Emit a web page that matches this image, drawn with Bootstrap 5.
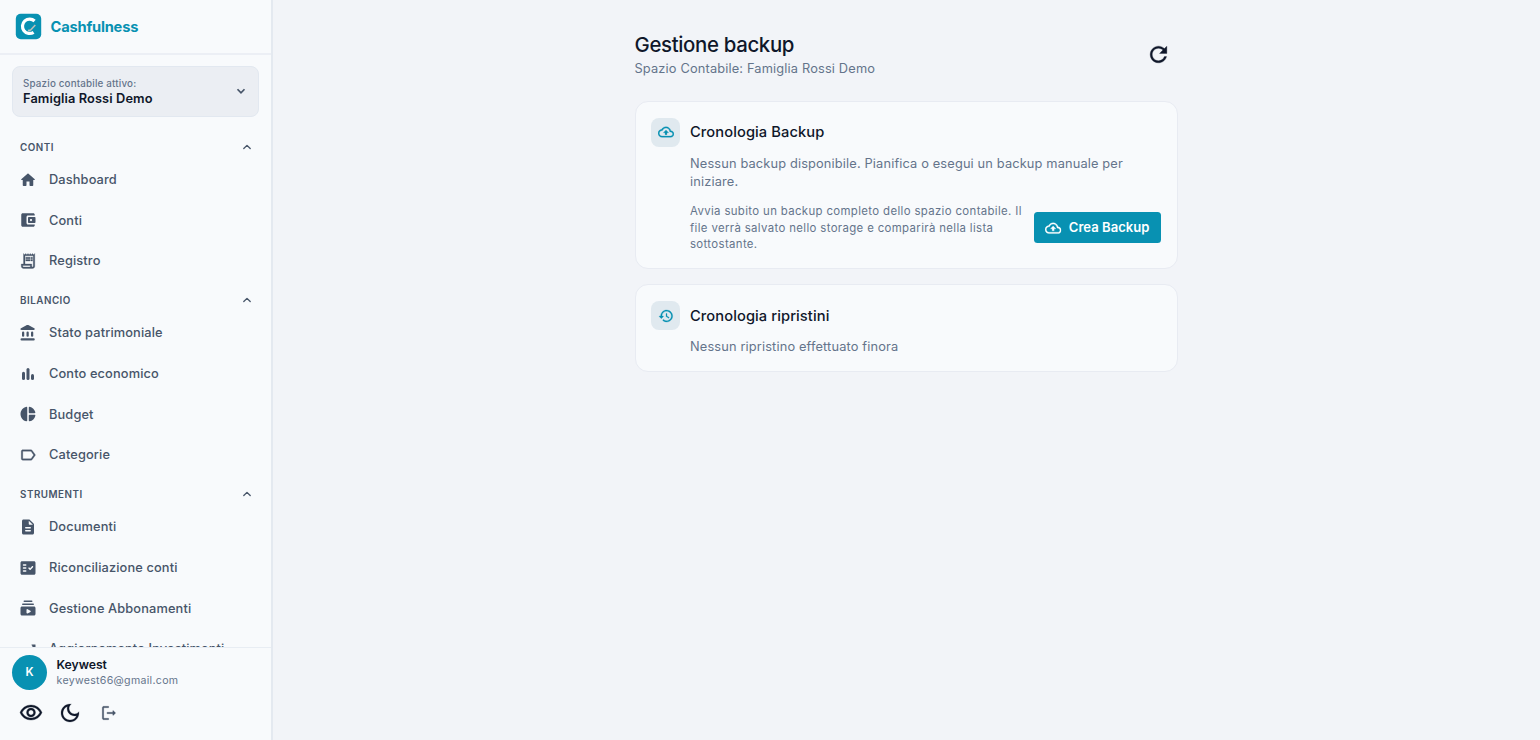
<!DOCTYPE html>
<html lang="it">
<head>
<meta charset="utf-8">
<meta name="viewport" content="width=device-width, initial-scale=1">
<title>Cashfulness - Gestione backup</title>
<link href="https://cdn.jsdelivr.net/npm/bootstrap@5.3.0/dist/css/bootstrap.min.css" rel="stylesheet">
<style>
:root{--teal:#0891b2;--ink:#0f172a;--slate:#475569;--muted:#64748b;--line:#e2e8f0}
body{font-family:Inter,"Liberation Sans",sans-serif;background:#f2f4f8;color:var(--ink);height:100vh;overflow:hidden}
svg{display:block;flex:none;fill:currentColor}
.sidebar{width:273px;background:#f8fafc;border-right:2px solid #e4e9f0;flex:none}
.brand{height:55px;padding:0 15px;border-bottom:2px solid #eceff5;gap:8.5px;flex:none}
.brand-name{color:var(--teal);font-size:14.7px;font-weight:700;letter-spacing:-.22px;padding-top:1px}
.space-box{margin:11px 12px 0;height:51px;padding:0 10.5px 0 10px;border:1px solid #e2e8f0;border-radius:8px;background:#ebeef3;flex:none}
.space-box svg{margin-top:-1px}
.space-label{font-size:9.8px;line-height:14px;font-weight:500;color:var(--muted);letter-spacing:.18px}
.space-name{font-size:12.8px;line-height:16px;font-weight:600;letter-spacing:.11px}
.menu{padding-top:19.2px;flex:1 1 0;min-height:0;overflow:hidden}
.menu-group{margin-bottom:8px}
.menu-head{height:23px;padding:1px 17px 0 20px;font-size:9.8px;font-weight:600;color:var(--slate);letter-spacing:.52px}
.menu-head svg{margin-top:-2px}
.menu-item{height:40.75px;padding-left:19.4px;gap:11.6px;font-size:12.8px;font-weight:500;color:var(--slate);letter-spacing:.13px;white-space:nowrap}
.account{height:93.5px;border-top:1.5px solid #e8edf3;padding:7.5px 12px 0;flex:none}
.account-text{margin-left:9.5px}
.avatar{width:35px;height:35px;border-radius:50%;background:var(--teal);color:#fff;font-size:11.5px;font-weight:600}
.user-name{font-size:12.24px;line-height:16px;font-weight:600;letter-spacing:-.05px}
.user-mail{font-size:10.6px;line-height:16px;color:var(--muted);letter-spacing:.3px}
.tools{padding:11px 0 0 7px;gap:15px}
.tools .exit{margin-left:2.5px}
.content-col{width:543px;padding-top:32px;margin-right:1px}
.page-title{font-size:20.4px;line-height:25px;font-weight:500;letter-spacing:-.34px;margin:0}
.page-sub{font-size:12.8px;line-height:18px;color:var(--muted);letter-spacing:.16px;margin-top:2.5px}
.reload{margin:9.8px 6.5px 0 0}
.panel{background:#f8fafc;border:1.5px solid #e8ebf2;border-radius:13px;padding:16px 15.5px 0}
.first-panel{margin-top:23px;height:168px}
.second-panel{margin-top:15.5px;height:88px}
.panel-head{gap:10px}
.tile{width:29px;height:29px;border-radius:8px;background:#e0e9ef;color:var(--teal)}
.tile svg{stroke:currentColor;stroke-width:.4}
.panel-title{font-size:14.7px;line-height:20px;font-weight:500;letter-spacing:.08px;margin:0}
.panel-text{font-size:12.8px;line-height:18.5px;color:var(--muted);letter-spacing:.15px;margin-top:8px}
.hint{font-size:11.4px;line-height:16.4px;color:var(--muted);letter-spacing:.36px}
.hint-row{margin-top:11.6px;gap:12px}
.btn-create{width:127px;height:31px;padding:0;gap:7px;border:0;border-radius:3.5px;background:var(--teal);color:#fff;font-size:13.05px;font-weight:600;letter-spacing:.03px;white-space:nowrap;flex:none}
.btn-create svg{stroke:currentColor;stroke-width:.4}
.inset{padding-left:39px}
</style>
</head>
<body class="d-flex">
<svg width="0" height="0" class="position-absolute" aria-hidden="true">
  <symbol id="up" viewBox="0 0 24 24"><path d="M6.5 14.700l5.500-5.500 5.500 5.500" fill="none" stroke="currentColor" stroke-width="2.300" stroke-linecap="round" stroke-linejoin="round"/></symbol>
  <symbol id="down" viewBox="0 0 24 24"><path d="M6 9l6 6 6-6" fill="none" stroke="currentColor" stroke-width="3"/></symbol>
  <symbol id="home" viewBox="0 0 24 24"><path d="M10 19v-5h4v5c0 .55.45 1 1 1h3c.55 0 1-.45 1-1v-7h1.7c.46 0 .68-.57.33-.87L12.67 3.6c-.38-.34-.96-.34-1.34 0l-8.36 7.53c-.34.3-.13.87.33.87H5v7c0 .55.45 1 1 1h3c.55 0 1-.45 1-1z"/></symbol>
  <symbol id="wallet" viewBox="0 0 24 24"><path d="M10 16V8c0-1.1.89-2 2-2h9V5c0-1.1-.9-2-2-2H5c-1.110 0-2 .9-2 2v14c0 1.1.89 2 2 2h14c1.1 0 2-.9 2-2v-1h-9c-1.110 0-2-.9-2-2zm3-8c-.55 0-1 .45-1 1v6c0 .55.45 1 1 1h8c.55 0 1-.45 1-1V9c0-.55-.45-1-1-1h-8zm3 5.500c-.83 0-1.500-.67-1.500-1.500s.67-1.500 1.500-1.500 1.500.67 1.500 1.500-.67 1.500-1.500 1.500z"/></symbol>
  <symbol id="receipt" viewBox="0 0 24 24"><path d="M19.500 3.500 18 2l-1.500 1.500L15 2l-1.500 1.500L12 2l-1.500 1.500L9 2 7.500 3.500 6 2v14H3v3c0 1.660 1.340 3 3 3h12c1.660 0 3-1.340 3-3V2l-1.500 1.500zM15 20H6c-.55 0-1-.45-1-1v-1h10v2zm4-1c0 .55-.45 1-1 1s-1-.45-1-1v-3H8V5h11v14zM9 7h6v2H9zM16 7h2v2h-2zM9 10h6v2H9zM16 10h2v2h-2z" stroke="currentColor" stroke-width=".4"/></symbol>
  <symbol id="bank" viewBox="0 0 24 24"><path d="M10.570 1.490l-7.900 4.160c-.41.21-.67.64-.67 1.100C2 7.440 2.560 8 3.250 8h16.510C20.440 8 21 7.440 21 6.750c0-.46-.26-.89-.67-1.100l-7.900-4.160c-.58-.31-1.280-.31-1.860 0z"/><rect x="4" y="10" width="3" height="7" rx="1.500"/><rect x="10" y="10" width="3" height="7" rx="1.500"/><rect x="16" y="10" width="3" height="7" rx="1.500"/><rect x="2" y="19" width="19" height="3" rx="1.500"/></symbol>
  <symbol id="bars" viewBox="0 0 24 24"><rect x="4" y="9" width="4" height="11" rx="2"/><rect x="10" y="4" width="4" height="16" rx="2"/><rect x="16" y="12" width="4" height="8" rx="2"/></symbol>
  <symbol id="pie" viewBox="0 0 24 24"><path d="M11 3.180v17.640c0 .64-.59 1.120-1.210.98C5.320 20.800 2 16.790 2 12s3.320-8.800 7.790-9.800c.62-.14 1.210.34 1.210.98zm2.030 0v6.810c0 .55.45 1 1 1h6.790c.64 0 1.120-.59.98-1.220-.85-3.760-3.800-6.720-7.550-7.570-.63-.14-1.220.34-1.220.98zm0 10.830v6.810c0 .64.59 1.120 1.220.98 3.760-.85 6.710-3.820 7.560-7.580.14-.62-.35-1.220-.98-1.220h-6.790c-.56.010-1.010.46-1.010 1.010z"/></symbol>
  <symbol id="tag" viewBox="0 0 24 24"><path d="M17.630 5.840C17.270 5.330 16.670 5 16 5L5 5.010C3.900 5.010 3 5.900 3 7v10c0 1.100.9 1.990 2 1.990L16 19c.67 0 1.270-.33 1.630-.84L22 12l-4.370-6.160zM16 17H5V7h11l3.550 5L16 17z" stroke="currentColor" stroke-width=".4"/></symbol>
  <symbol id="doc" viewBox="0 0 24 24"><path d="M14.590 2.590c-.38-.38-.89-.59-1.420-.59H6c-1.100 0-2 .9-2 2v16c0 1.100.89 2 1.990 2H18c1.100 0 2-.9 2-2V8.830c0-.53-.21-1.040-.59-1.410l-4.820-4.830zM15 18H9c-.55 0-1-.45-1-1s.45-1 1-1h6c.55 0 1 .45 1 1s-.45 1-1 1zm0-4H9c-.55 0-1-.45-1-1s.45-1 1-1h6c.55 0 1 .45 1 1s-.45 1-1 1zm-2-6V3.500L18.500 9H14c-.55 0-1-.45-1-1z"/></symbol>
  <symbol id="check" viewBox="0 0 24 24"><path d="M20 3H4c-1.100 0-2 .9-2 2v14c0 1.100.9 2 2 2h16c1.100 0 2-.9 2-2V5c0-1.100-.9-2-2-2zM9 17H6c-.55 0-1-.45-1-1s.45-1 1-1h3c.55 0 1 .45 1 1s-.45 1-1 1zm0-4H6c-.55 0-1-.45-1-1s.45-1 1-1h3c.55 0 1 .45 1 1s-.45 1-1 1zm0-4H6c-.55 0-1-.45-1-1s.45-1 1-1h3c.55 0 1 .45 1 1s-.45 1-1 1zm9.700 2.120-3.170 3.170c-.39.39-1.030.39-1.420 0l-1.410-1.420c-.39-.39-.39-1.020 0-1.410.39-.39 1.020-.39 1.410 0l.71.71 2.470-2.470c.39-.39 1.020-.39 1.410 0l.01.01c.38.39.38 1.030-.01 1.410z"/></symbol>
  <symbol id="subs" viewBox="0 0 24 24"><path d="M5 6h14c.55 0 1 .45 1 1s-.45 1-1 1H5c-.55 0-1-.45-1-1s.45-1 1-1zM7 2h10c.55 0 1 .45 1 1s-.45 1-1 1H7c-.55 0-1-.45-1-1s.45-1 1-1zM22 12v8c0 1.100-.9 2-2 2H4c-1.100 0-2-.9-2-2v-8c0-1.100.9-2 2-2h16c1.100 0 2 .9 2 2zm-6.800 3.560-3.730-2.030c-.66-.36-1.470.12-1.470.88v4.050c0 .76.81 1.240 1.480.88l3.730-2.030c.69-.37.69-1.370-.01-1.750z"/></symbol>
  <symbol id="trend" viewBox="0 0 24 24"><path d="M16.850 6.850l1.440 1.440-4.880 4.880-3.290-3.290c-.39-.39-1.020-.39-1.410 0l-6 6.010c-.39.39-.39 1.020 0 1.410.39.39 1.020.39 1.410 0L9.410 12l3.290 3.290c.39.39 1.020.39 1.410 0l5.590-5.580 1.440 1.440c.31.31.85.09.85-.35V6.500c.01-.28-.21-.5-.49-.5h-4.290c-.45 0-.67.54-.36.85z"/></symbol>
  <symbol id="cloud" viewBox="0 0 24 24"><path d="M19.350 10.040C18.670 6.590 15.640 4 12 4 9.110 4 6.600 5.640 5.350 8.040 2.340 8.360 0 10.910 0 14c0 3.310 2.690 6 6 6h13c2.760 0 5-2.240 5-5 0-2.640-2.050-4.780-4.650-4.960zM19 18H6c-2.210 0-4-1.790-4-4 0-2.050 1.530-3.760 3.560-3.970l1.070-.11.5-.95C8.080 7.140 9.940 6 12 6c2.620 0 4.880 1.860 5.390 4.430l.3 1.500 1.530.11c1.560.1 2.780 1.410 2.780 2.960 0 1.650-1.350 3-3 3zM8 13h2.550v3h2.900v-3H16l-4-4z"/></symbol>
  <symbol id="history" viewBox="0 0 24 24"><path d="M13.260 3C8.170 2.860 4 6.950 4 12H2.210c-.45 0-.67.54-.35.85l2.790 2.800c.2.2.51.2.71 0l2.790-2.800c.31-.31.09-.85-.36-.85H6c0-3.900 3.180-7.050 7.100-7 3.720.05 6.850 3.180 6.900 6.900.05 3.910-3.100 7.100-7 7.100-1.610 0-3.100-.55-4.280-1.480-.4-.31-.96-.28-1.320.08-.42.42-.39 1.130.08 1.490C9 20.290 10.910 21 13 21c5.050 0 9.140-4.170 9-9.260-.13-4.690-4.050-8.610-8.740-8.740zm-.51 5c-.41 0-.75.34-.75.75v3.680c0 .35.19.68.49.86l3.120 1.850c.36.21.82.09 1.030-.26.21-.36.09-.82-.26-1.030l-2.880-1.710v-3.400c0-.4-.34-.74-.75-.74z"/></symbol>
  <symbol id="refresh" viewBox="0 0 24 24"><path d="M17.650 6.350C16.200 4.900 14.210 4 12 4c-4.420 0-7.990 3.580-7.990 8s3.570 8 7.990 8c3.730 0 6.840-2.550 7.730-6h-2.080c-.82 2.330-3.040 4-5.650 4-3.310 0-6-2.690-6-6s2.690-6 6-6c1.660 0 3.140.69 4.220 1.780L13 11h7V4l-2.350 2.350z" stroke="currentColor" stroke-width=".3"/></symbol>
  <symbol id="eye" viewBox="0 0 24 24"><path d="M12 6c3.790 0 7.170 2.130 8.820 5.500C19.170 14.870 15.790 17 12 17s-7.170-2.130-8.820-5.500C4.830 8.130 8.210 6 12 6m0-2C7 4 2.730 7.110 1 11.500 2.730 15.890 7 19 12 19s9.270-3.110 11-7.500C21.270 7.110 17 4 12 4zm0 5c1.380 0 2.500 1.120 2.500 2.500S13.380 14 12 14s-2.500-1.120-2.500-2.500S10.620 9 12 9m0-2c-2.480 0-4.500 2.020-4.500 4.500S9.520 16 12 16s4.500-2.020 4.500-4.500S14.480 7 12 7z" stroke="currentColor" stroke-width=".3"/></symbol>
  <symbol id="moon" viewBox="0 0 24 24"><path d="M9.370 5.510C9.190 6.150 9.100 6.820 9.100 7.500c0 4.080 3.320 7.400 7.400 7.400.68 0 1.350-.09 1.990-.27C17.450 17.190 14.930 19 12 19c-3.860 0-7-3.140-7-7 0-2.930 1.810-5.450 4.370-6.490zM12 3c-4.970 0-9 4.030-9 9s4.030 9 9 9 9-4.030 9-9c0-.46-.04-.92-.1-1.360-.98 1.370-2.580 2.260-4.400 2.260-2.980 0-5.400-2.420-5.400-5.400 0-1.810.89-3.420 2.260-4.400C12.920 3.040 12.460 3 12 3z" stroke="currentColor" stroke-width=".2"/></symbol>
  <symbol id="logout" viewBox="0 0 24 24"><path d="M5 5h6c.55 0 1-.45 1-1s-.45-1-1-1H5c-1.100 0-2 .9-2 2v14c0 1.100.9 2 2 2h6c.55 0 1-.45 1-1s-.45-1-1-1H5V5zM20.650 11.650l-2.790-2.790c-.32-.32-.86-.1-.86.35V11h-7c-.55 0-1 .45-1 1s.45 1 1 1h7v1.790c0 .45.54.67.85.35l2.790-2.790c.2-.19.2-.51.01-.7z" stroke="currentColor" stroke-width=".3"/></symbol>
</svg>

<aside class="sidebar d-flex flex-column vh-100">
  <div class="brand d-flex align-items-center">
    <svg width="27" height="27" viewBox="0 0 27 27"><rect x=".8" y=".8" width="25.400" height="25.400" rx="5" fill="#0891b2"/><path d="M19.600 8A7.200 7.200 0 1 0 18.600 19.300" fill="none" stroke="#fff" stroke-width="3.200"/><path d="M13 17.600l2.600-.6 4.700-5" fill="none" stroke="#b9bdb9" stroke-width="1.600"/></svg>
    <span class="brand-name">Cashfulness</span>
  </div>
  <div class="space-box d-flex align-items-center justify-content-between">
    <div><div class="space-label">Spazio contabile attivo:</div><div class="space-name">Famiglia Rossi Demo</div></div>
    <svg width="14" height="14" color="#475569"><use href="#down"/></svg>
  </div>
  <nav class="menu">
    <div class="menu-group">
      <div class="menu-head d-flex align-items-center justify-content-between">CONTI<svg width="14" height="14"><use href="#up"/></svg></div>
      <div class="menu-item d-flex align-items-center"><svg width="18" height="18"><use href="#home"/></svg>Dashboard</div>
      <div class="menu-item d-flex align-items-center"><svg width="18" height="18"><use href="#wallet"/></svg>Conti</div>
      <div class="menu-item d-flex align-items-center"><svg width="18" height="18"><use href="#receipt"/></svg>Registro</div>
    </div>
    <div class="menu-group">
      <div class="menu-head d-flex align-items-center justify-content-between">BILANCIO<svg width="14" height="14"><use href="#up"/></svg></div>
      <div class="menu-item d-flex align-items-center"><svg width="18" height="18"><use href="#bank"/></svg>Stato patrimoniale</div>
      <div class="menu-item d-flex align-items-center"><svg width="18" height="18"><use href="#bars"/></svg>Conto economico</div>
      <div class="menu-item d-flex align-items-center"><svg width="18" height="18"><use href="#pie"/></svg>Budget</div>
      <div class="menu-item d-flex align-items-center"><svg width="18" height="18"><use href="#tag"/></svg>Categorie</div>
    </div>
    <div class="menu-group">
      <div class="menu-head d-flex align-items-center justify-content-between">STRUMENTI<svg width="14" height="14"><use href="#up"/></svg></div>
      <div class="menu-item d-flex align-items-center"><svg width="18" height="18"><use href="#doc"/></svg>Documenti</div>
      <div class="menu-item d-flex align-items-center"><svg width="18" height="18"><use href="#check"/></svg>Riconciliazione conti</div>
      <div class="menu-item d-flex align-items-center"><svg width="18" height="18"><use href="#subs"/></svg>Gestione Abbonamenti</div>
      <div class="menu-item d-flex align-items-center"><svg width="18" height="18"><use href="#trend"/></svg>Aggiornamento Investimenti</div>
    </div>
  </nav>
  <div class="account">
    <div class="d-flex align-items-center">
      <div class="avatar d-flex align-items-center justify-content-center">K</div>
      <div class="account-text"><div class="user-name">Keywest</div><div class="user-mail">keywest66@gmail.com</div></div>
    </div>
    <div class="d-flex align-items-center tools">
      <svg width="24" height="24"><use href="#eye"/></svg>
      <svg width="24" height="24"><use href="#moon"/></svg>
      <svg class="exit" width="18" height="18" color="#475569"><use href="#logout"/></svg>
    </div>
  </div>
</aside>

<main class="flex-grow-1 d-flex justify-content-center">
  <div class="content-col">
    <header class="d-flex justify-content-between">
      <div><h1 class="page-title">Gestione backup</h1><div class="page-sub">Spazio Contabile: Famiglia Rossi Demo</div></div>
      <svg class="reload" width="25" height="25"><use href="#refresh"/></svg>
    </header>
    <section class="panel first-panel">
      <div class="panel-head d-flex align-items-center"><div class="tile d-flex align-items-center justify-content-center"><svg width="16" height="16"><use href="#cloud"/></svg></div><h2 class="panel-title">Cronologia Backup</h2></div>
      <div class="inset">
        <div class="panel-text">Nessun backup disponibile. Pianifica o esegui un backup manuale per iniziare.</div>
        <div class="d-flex align-items-center justify-content-between hint-row">
          <div class="hint">Avvia subito un backup completo dello spazio contabile. Il file verrà salvato nello storage e comparirà nella lista sottostante.</div>
          <button type="button" class="btn btn-create d-flex align-items-center justify-content-center"><svg width="16.3" height="16.3"><use href="#cloud"/></svg>Crea Backup</button>
        </div>
      </div>
    </section>
    <section class="panel second-panel">
      <div class="panel-head d-flex align-items-center"><div class="tile d-flex align-items-center justify-content-center"><svg width="16" height="16"><use href="#history"/></svg></div><h2 class="panel-title">Cronologia ripristini</h2></div>
      <div class="inset"><div class="panel-text">Nessun ripristino effettuato finora</div></div>
    </section>
  </div>
</main>
<script src="https://cdn.jsdelivr.net/npm/bootstrap@5.3.0/dist/js/bootstrap.bundle.min.js"></script>
</body>
</html>
